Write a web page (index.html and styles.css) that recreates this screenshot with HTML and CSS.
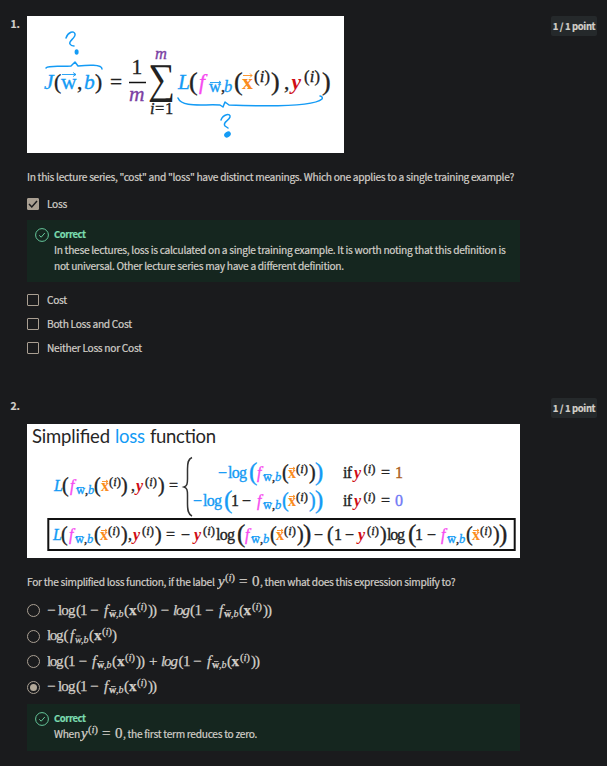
FILE: index.html
```
<!DOCTYPE html>
<html lang="en">
<head>
<meta charset="utf-8">
<title>Quiz</title>
<link rel="stylesheet" href="styles.css">
</head>
<body>
<main class="quiz">
<section class="question first">
  <h2 class="number">1.</h2>
  <div class="content">
    <svg class="figure" width="317" height="137" viewBox="27 16 317 137">
      <g class="ink">
        <path d="M66 38 C68 32 74 30 75 34 C76 38 68 41 70 44 C71 46 73 46 74 46"/>
        <ellipse class="dot" cx="76.600" cy="52" rx="2" ry="2.800"/>
        <path d="M46 68 C49 65 60 67 71 66 L75 62 L78 66 C87 65 102 64 102 69"/>
        <path d="M178 98 C182 108 203 104 220 105 L223 107 L225 102 L229 105 C255 106 312 108 322 99 C323 97 321 96 320 96"/>
        <path d="M221 120 C223 114 231 113 230 117 C229 121 222 122 225 126 L228 128"/>
        <ellipse class="dot" cx="227.500" cy="134.500" rx="3.600" ry="2.600" transform="rotate(-35 227.500 134.500)"/>
      </g>
      <g class="math big">
        <text y="89"><tspan class="b i" x="44">J</tspan><tspan x="54">(</tspan><tspan class="b" x="61">w</tspan><tspan x="77">,</tspan><tspan class="b i" x="84">b</tspan><tspan x="95">)</tspan><tspan x="110">=</tspan></text>
        <text x="131.500" y="74">1</text>
        <text class="p i" x="129" y="101">m</text>
        <text class="sum" x="148" y="93" textLength="27" lengthAdjust="spacingAndGlyphs">∑</text>
        <text class="p i small" x="155" y="59">m</text>
        <text class="small" y="113.500"><tspan class="i" x="150">i</tspan><tspan x="155">=</tspan><tspan x="165">1</tspan></text>
        <text y="89"><tspan class="b i" x="178">L</tspan></text>
        <text class="tall" y="90"><tspan x="189">(</tspan><tspan x="234">(</tspan><tspan x="271">)</tspan><tspan x="322">)</tspan></text>
        <text y="89"><tspan class="f i" x="199">f</tspan><tspan class="o" x="242">x</tspan><tspan x="284">,</tspan><tspan class="r" x="291.500">y</tspan></text>
        <text class="small" y="92"><tspan class="b" x="209">w</tspan><tspan x="221">,</tspan><tspan class="b i" x="224">b</tspan></text>
        <text class="small" y="82"><tspan x="254" textLength="16">(<tspan class="i">i</tspan>)</tspan><tspan x="304" textLength="16">(<tspan class="i">i</tspan>)</tspan></text>
      </g>
      <path class="rule" d="M129 82.500H146"/>
      <path class="vec b" d="M62 74.500H76M73 72.500L76 74.500L73 76.500M210 82.500H221M219 81L221 82.500L219 84"/>
      <path class="vec o" d="M243 75.500H252M250 73.500L252 75.500L250 77.500"/>
    </svg>
    <p class="prompt wide">In this lecture series, "cost" and "loss" have distinct meanings. Which one applies to a single training example?</p>
    <div class="choice"><span class="check on"><svg width="12" height="12" viewBox="0 0 12 12"><path d="M2 6L4.800 9L10 3"/></svg></span>Loss</div>
    <div class="feedback">
      <svg class="ok" width="14" height="14" viewBox="0 0 14 14"><circle cx="7" cy="7" r="6.400"/><path d="M4.200 7.300L6.200 9.200L9.800 5"/></svg>
      <div>
        <strong>Correct</strong>
        <p>In these lectures, loss is calculated on a single training example. It is worth noting that this definition is<br>not universal. Other lecture series may have a different definition.</p>
      </div>
    </div>
    <div class="rest">
      <div class="choice"><span class="check"></span>Cost</div>
      <div class="choice"><span class="check"></span>Both Loss and Cost</div>
      <div class="choice"><span class="check"></span>Neither Loss nor Cost</div>
    </div>
  </div>
  <span class="badge">1 / 1 point</span>
</section>
<section class="question second">
  <h2 class="number">2.</h2>
  <div class="content">
    <svg class="figure" width="493" height="134" viewBox="27 424 493 134">
      <text class="title" y="443"><tspan x="32" textLength="78">Simplified</tspan><tspan class="b" x="115" textLength="30">loss</tspan><tspan x="150" textLength="66">function</tspan></text>
      <path class="brace" d="M192 457.500C188 459 187.500 463 187.500 469V479C187.500 484 187 486 184 487C187 488 187.500 490 187.500 495V504C187.500 510 188 514 192 516"/>
      <rect class="box" x="48.300" y="519" width="466.400" height="31"/>
      <g class="math mid">
        <text y="491"><tspan class="b i" x="54">L</tspan><tspan class="f i" x="70">f</tspan><tspan class="o" x="101">x</tspan><tspan x="131">,</tspan><tspan class="r" x="136">y</tspan><tspan x="169">=</tspan></text>
        <text class="paren" y="492"><tspan x="62">(</tspan><tspan x="94">(</tspan><tspan x="121">)</tspan><tspan x="158">)</tspan></text>
        <text class="sub" y="494"><tspan class="b" x="76">w</tspan><tspan x="85">,</tspan><tspan class="b i" x="88">b</tspan></text>
        <text class="sup" y="486"><tspan x="109" textLength="12">(<tspan class="i">i</tspan>)</tspan><tspan x="145" textLength="12">(<tspan class="i">i</tspan>)</tspan></text>

        <text y="478"><tspan class="b" x="218">−</tspan><tspan class="b" x="228" textLength="19">log</tspan><tspan class="f i" x="257">f</tspan><tspan class="o" x="288">x</tspan><tspan x="343" textLength="9">if</tspan><tspan class="r" x="354">y</tspan><tspan x="381">=</tspan><tspan class="n" x="395">1</tspan></text>
        <text class="huge b" y="480"><tspan x="249">(</tspan><tspan x="315">)</tspan></text>
        <text class="paren" y="479"><tspan x="282">(</tspan><tspan x="309">)</tspan></text>
        <text class="sub" y="481"><tspan class="b" x="263">w</tspan><tspan x="272">,</tspan><tspan class="b i" x="275">b</tspan></text>
        <text class="sup" y="473"><tspan x="296" textLength="12">(<tspan class="i">i</tspan>)</tspan><tspan x="363.500" textLength="12">(<tspan class="i">i</tspan>)</tspan></text>

        <text y="506"><tspan class="b" x="193">−</tspan><tspan class="b" x="203" textLength="19">log</tspan><tspan x="231">1</tspan><tspan x="242">−</tspan><tspan class="f i" x="257">f</tspan><tspan class="o" x="288">x</tspan><tspan x="343" textLength="9">if</tspan><tspan class="r" x="354">y</tspan><tspan x="381">=</tspan><tspan class="z" x="395">0</tspan></text>
        <text class="huge b" y="508"><tspan x="224">(</tspan><tspan x="315">)</tspan></text>
        <text class="paren b" y="507"><tspan x="282">(</tspan><tspan x="309">)</tspan></text>
        <text class="sub" y="509"><tspan class="b" x="263">w</tspan><tspan x="272">,</tspan><tspan class="b i" x="275">b</tspan></text>
        <text class="sup" y="501"><tspan x="296" textLength="12">(<tspan class="i">i</tspan>)</tspan><tspan x="363.500" textLength="12">(<tspan class="i">i</tspan>)</tspan></text>

        <text y="540"><tspan class="b i" x="53">L</tspan><tspan class="f i" x="69">f</tspan><tspan class="o" x="100">x</tspan><tspan x="128">,</tspan><tspan class="r" x="133">y</tspan><tspan x="166">=</tspan><tspan x="181">−</tspan><tspan class="r" x="194">y</tspan><tspan x="216" textLength="19">log</tspan><tspan class="f i" x="245">f</tspan><tspan class="o" x="276">x</tspan><tspan x="314">−</tspan><tspan x="334">1</tspan><tspan x="345">−</tspan><tspan class="r" x="358">y</tspan><tspan x="387" textLength="18">log</tspan><tspan x="415">1</tspan><tspan x="427">−</tspan><tspan class="f i" x="441">f</tspan><tspan class="o" x="472">x</tspan></text>
        <text class="paren" y="541"><tspan x="61">(</tspan><tspan x="94">(</tspan><tspan x="121">)</tspan><tspan x="155">)</tspan><tspan x="270">(</tspan><tspan x="297">)</tspan><tspan x="327">(</tspan><tspan x="380">)</tspan><tspan x="466">(</tspan><tspan x="493">)</tspan></text>
        <text class="huge" y="542"><tspan x="237">(</tspan><tspan x="303">)</tspan><tspan x="408">(</tspan><tspan x="499">)</tspan></text>
        <text class="sub" y="543"><tspan class="b" x="75">w</tspan><tspan x="84">,</tspan><tspan class="b i" x="87">b</tspan><tspan class="b" x="251">w</tspan><tspan x="260">,</tspan><tspan class="b i" x="263">b</tspan><tspan class="b" x="447">w</tspan><tspan x="456">,</tspan><tspan class="b i" x="459">b</tspan></text>
        <text class="sup" y="535"><tspan x="108" textLength="12">(<tspan class="i">i</tspan>)</tspan><tspan x="142" textLength="12">(<tspan class="i">i</tspan>)</tspan><tspan x="203" textLength="12">(<tspan class="i">i</tspan>)</tspan><tspan x="284" textLength="12">(<tspan class="i">i</tspan>)</tspan><tspan x="367" textLength="12">(<tspan class="i">i</tspan>)</tspan><tspan x="480" textLength="12">(<tspan class="i">i</tspan>)</tspan></text>
      </g>
      <path class="vec b" d="M77 487.500H84M264 474.500H271M264 502.500H271M76 536.500H83M252 536.500H259M448 536.500H455"/>
      <path class="vec o" d="M102 481.500H108M106 480L108 481.500L106 483M289 468.500H295M293 467L295 468.500L293 470M289 496.500H295M293 495L295 496.500L293 498M101 530.500H107M105 529L107 530.500L105 532M277 530.500H283M281 529L283 530.500L281 532M473 530.500H479M477 529L479 530.500L477 532"/>
    </svg>
    <p class="prompt inline"><span class="lead">For the simplified loss function, if the label</span><svg class="eq" width="43" height="20" viewBox="0 0 43 20"><text y="14"><tspan class="i" x="1">y</tspan><tspan x="22">=</tspan><tspan x="35">0</tspan></text><text class="sup" y="9" x="8" textLength="10">(<tspan class="i">i</tspan>)</text></svg><span>, then what does this expression simplify to?</span></p>
    <div class="options">
      <div class="choice"><span class="radio"></span><svg class="eq" width="230" height="24" viewBox="47 599 230 24"><text y="615"><tspan x="47">−</tspan><tspan x="58" textLength="17.500">log</tspan><tspan x="76">(</tspan><tspan x="80">1</tspan><tspan x="90">−</tspan><tspan class="i" x="104">f</tspan><tspan x="124">(</tspan><tspan class="bold" x="129">x</tspan><tspan x="148" textLength="9">))</tspan><tspan x="160.500">−</tspan><tspan class="i" x="173" textLength="17">log</tspan><tspan x="190">(</tspan><tspan x="194.500">1</tspan><tspan x="205">−</tspan><tspan class="i" x="219">f</tspan><tspan x="239">(</tspan><tspan class="bold" x="243.500">x</tspan><tspan x="263" textLength="9">))</tspan></text><text class="sub" y="617"><tspan class="bold" x="109">w</tspan><tspan x="116">,</tspan><tspan class="i" x="118.500">b</tspan><tspan class="bold" x="224">w</tspan><tspan x="231">,</tspan><tspan class="i" x="233.500">b</tspan></text><text class="sup" y="610"><tspan x="137" textLength="10">(<tspan class="i">i</tspan>)</tspan><tspan x="252" textLength="10">(<tspan class="i">i</tspan>)</tspan></text><path d="M111 610.500H115.500M226 610.500H230.500"/></svg></div>
      <div class="choice"><span class="radio"></span><svg class="eq" width="230" height="24" viewBox="47 624.500 230 24"><text y="640"><tspan x="47" textLength="16.500">log</tspan><tspan x="63.500">(</tspan><tspan class="i" x="70">f</tspan><tspan x="89">(</tspan><tspan class="bold" x="94">x</tspan><tspan x="112">)</tspan></text><text class="sub" y="643"><tspan class="i" x="75">w</tspan><tspan x="81">,</tspan><tspan class="i" x="83.500">b</tspan></text><text class="sup" y="635"><tspan x="102" textLength="10">(<tspan class="i">i</tspan>)</tspan></text><path d="M76 636.500H80.500"/></svg></div>
      <div class="choice"><span class="radio"></span><svg class="eq" width="230" height="24" viewBox="47 650 230 24"><text y="666"><tspan x="47" textLength="16.500">log</tspan><tspan x="64">(</tspan><tspan x="68">1</tspan><tspan x="78.500">−</tspan><tspan class="i" x="92">f</tspan><tspan x="112">(</tspan><tspan class="bold" x="117">x</tspan><tspan x="136" textLength="9">))</tspan><tspan x="149">+</tspan><tspan class="i" x="161" textLength="17">log</tspan><tspan x="178.500">(</tspan><tspan x="183">1</tspan><tspan x="193">−</tspan><tspan class="i" x="207">f</tspan><tspan x="227">(</tspan><tspan class="bold" x="231.500">x</tspan><tspan x="251" textLength="9">))</tspan></text><text class="sub" y="668"><tspan class="bold" x="97">w</tspan><tspan x="104">,</tspan><tspan class="i" x="106.500">b</tspan><tspan class="bold" x="212">w</tspan><tspan x="219">,</tspan><tspan class="i" x="221.500">b</tspan></text><text class="sup" y="661"><tspan x="125" textLength="10">(<tspan class="i">i</tspan>)</tspan><tspan x="240" textLength="10">(<tspan class="i">i</tspan>)</tspan></text><path d="M99 661.500H103.500M214 661.500H218.500"/></svg></div>
      <div class="choice"><span class="radio on"></span><svg class="eq" width="230" height="24" viewBox="47 675 230 24"><text y="691"><tspan x="47">−</tspan><tspan x="58" textLength="17.500">log</tspan><tspan x="76">(</tspan><tspan x="80">1</tspan><tspan x="90">−</tspan><tspan class="i" x="104">f</tspan><tspan x="124">(</tspan><tspan class="bold" x="129">x</tspan><tspan x="148" textLength="9">))</tspan></text><text class="sub" y="693"><tspan class="bold" x="109">w</tspan><tspan x="116">,</tspan><tspan class="i" x="118.500">b</tspan></text><text class="sup" y="686"><tspan x="137" textLength="10">(<tspan class="i">i</tspan>)</tspan></text><path d="M111 686.500H115.500"/></svg></div>
    </div>
    <div class="feedback short">
      <svg class="ok" width="14" height="14" viewBox="0 0 14 14"><circle cx="7" cy="7" r="6.400"/><path d="M4.200 7.300L6.200 9.200L9.800 5"/></svg>
      <div>
        <strong>Correct</strong>
        <p class="inline"><span class="when">When</span><svg class="eq" width="43" height="20" viewBox="0 0 43 20"><text y="14"><tspan class="i" x="1">y</tspan><tspan x="22">=</tspan><tspan x="35">0</tspan></text><text class="sup" y="9" x="8" textLength="10">(<tspan class="i">i</tspan>)</text></svg><span>, the first term reduces to zero.</span></p>
      </div>
    </div>
  </div>
  <span class="badge">1 / 1 point</span>
</section>
</main>
</body>
</html>
```
FILE: styles.css
```
* { box-sizing: border-box; }
body { margin: 0; background: #1a1b1d; color: #d3cfc9; font: 10.200px/16px "Noto Sans CJK SC", "Open Sans", sans-serif; letter-spacing: -0.290px; -webkit-text-stroke: 0.200px; white-space: nowrap; overflow: hidden; }
p, h2 { margin: 0; }
.quiz { height: 766px; padding-top: 16px; }
.question { display: grid; grid-template-columns: 16.500px 493px 46px; padding-left: 10.500px; align-items: start; }
.first { height: 382px; }
.badge { margin-left: 31px; width: 46px; height: 20px; border-radius: 2px; background: #25292b; font-size: 9.500px; font-weight: 700; line-height: 20px; text-align: center; letter-spacing: -0.350px; }
.number { font-size: 10.500px; font-weight: 700; line-height: 15px; }
.figure { display: block; background: #fff; }
.second .figure { margin-top: 26px; }
.prompt { height: 16px; margin-top: 16px; }
.first .content > .choice { margin: 7px 0 4px; }
.choice { display: flex; align-items: center; gap: 8px; height: 24px; }
.check { width: 12px; height: 12px; border: 1px solid #a99f92; border-radius: 1px; }
.check.on { background: #a99f92; }
.check svg { display: block; margin: -1px; }
.check path { fill: none; stroke: #1a1b1d; stroke-width: 1.500; }
.feedback { display: flex; gap: 5px; height: 62px; padding: 6px 8px; background: #15261f; }
.feedback strong { display: block; color: #7bdcb0; font-size: 9.500px; line-height: 16px; letter-spacing: -0.450px; }
.ok { flex: none; margin-top: 2px; fill: none; stroke: #65c79b; stroke-width: 1; }
.rest { margin-top: 6px; }
.inline { display: flex; align-items: center; height: 16px; }
.lead { width: 190px; }
.when { width: 26px; }
.options { margin-top: 8px; }
.options .choice { height: 25.500px; gap: 7px; }
.radio { display: flex; align-items: center; justify-content: center; width: 13px; height: 13px; border: 1.500px solid #a99f92; border-radius: 50%; }
.radio.on::after { content: ""; width: 7px; height: 7px; border-radius: 50%; background: #b3a999; }
.short { height: 47px; margin-top: 4px; }

text { letter-spacing: 0; -webkit-text-stroke: 0; }
.eq { flex: none; fill: #d3cfc9; font: 15px "Liberation Serif", serif; }
.eq text { stroke: #d3cfc9; stroke-width: 0.250; }
.eq .sub { font-size: 10px; }
.eq .sup { font-size: 11px; }
.eq path { stroke: #d3cfc9; stroke-width: 0.800; }
.bold { font-weight: 700; }
.i { font-style: italic; }
.math { fill: #222; stroke: #222; font-family: "Liberation Serif", serif; }
.math text { stroke-width: 0.350; }
.big { font-size: 21.500px; }
.big .small { font-size: 16.500px; }
.big .tall { font-size: 26px; }
.big text.sum { font-size: 42px; stroke-width: 0; }
.mid { font-size: 16px; }
.mid .sub { font-size: 12.500px; }
.mid .sup { font-size: 12.500px; }
.mid .paren { font-size: 20px; }
.mid .huge { font-size: 25px; }
.title { font: 18.500px Lato, sans-serif; fill: #262626; }
.b { fill: #149bf5; }
.math .b { stroke: #149bf5; }
.math .p { fill: #7b3fa3; stroke: #7b3fa3; }
.math .f { fill: #f64af0; stroke: #f64af0; }
.math .o { fill: #fb8c1e; stroke: none; font-weight: 700; }
.math .r { fill: #cf0d16; stroke: none; font-weight: 700; font-style: italic; }
.math .n { fill: #ad5e1d; stroke: #ad5e1d; }
.math .z { fill: #7079f5; stroke: #7079f5; }
.ink { fill: none; stroke: #149bf5; stroke-width: 1.500; stroke-linecap: round; stroke-linejoin: round; }
.ink .dot { fill: #149bf5; stroke: none; }
.rule { stroke: #111; stroke-width: 1.500; }
.vec { fill: none; stroke: #149bf5; stroke-width: 0.900; }
.vec.o { stroke: #fb8c1e; }
.brace { fill: none; stroke: #333; stroke-width: 1.500; }
.box { fill: none; stroke: #111; stroke-width: 2; }
```
